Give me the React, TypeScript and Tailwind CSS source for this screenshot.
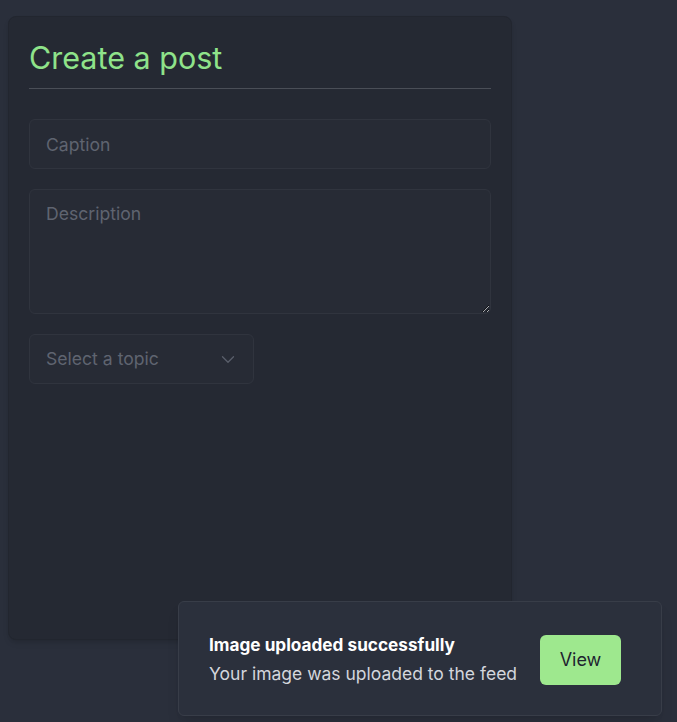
import React from "react";

const ChevronDown = () => (
  <svg width="22" height="22" viewBox="0 0 24 24" fill="none" stroke="currentColor" strokeWidth="1.4" strokeLinecap="round" strokeLinejoin="round">
    <path d="M6 9.5l6 6 6-6" />
  </svg>
);

const Toast = () => {
  return (
    <div className="absolute right-[15px] bottom-[6px] w-[484px] h-[115px] flex flex-row items-center justify-between pl-[30px] pr-[40px] bg-[#2b303c] border border-[#383d48] rounded-md shadow-lg">
      <div className="flex flex-col gap-[5px] pt-[2px]">
        <p className="text-white font-bold text-[17.2px] leading-6">Image uploaded successfully</p>
        <p className="text-[#d3d6dc] text-[17.5px] leading-6">Your image was uploaded to the feed</p>
      </div>
      <button type="button" className="w-[81px] h-[50px] mt-[2px] rounded-md bg-[#9ee88e] text-[#1e2430] text-[18px]">
        View
      </button>
    </div>
  );
};

const App = () => {
  return (
    <div className="relative w-full h-[722px] bg-[#2a2f3b] pt-4 pl-2 overflow-hidden" style={{ fontFamily: "Inter, 'Noto Sans', sans-serif" }}>
      <div className="w-[504px] h-[624px] flex flex-col px-5 pt-[23px] bg-[#252933] border border-[#22262f] rounded-lg shadow-md">
        <div className="pb-3 border-b border-[#4a4e57]">
          <h1 className="text-[30.5px] leading-9 text-[#8fe38a] font-normal">Create a post</h1>
        </div>
        <div className="flex flex-col gap-5 mt-[30px]">
          <input
            type="text"
            placeholder="Caption"
            className="h-[50px] w-full px-4 rounded-md bg-[#272b35] border border-[#30343e] text-[17.6px] text-white placeholder:text-[#5f6470] outline-none"
          />
          <textarea
            placeholder="Description"
            className="h-[125px] w-full px-4 py-[11px] rounded-md bg-[#272b35] border border-[#30343e] text-[17.6px] text-white placeholder:text-[#5f6470] outline-none"
          />
          <button
            type="button"
            className="h-[50px] w-[225px] flex flex-row items-center justify-between pl-4 pr-[14px] rounded-md bg-[#272b35] border border-[#30343e] text-[17.6px] text-[#5f6470]"
          >
            <span>Select a topic</span>
            <span className="text-[#5a5f6b]">
              <ChevronDown />
            </span>
          </button>
        </div>
      </div>
      <Toast />
    </div>
  );
};

export default App;
